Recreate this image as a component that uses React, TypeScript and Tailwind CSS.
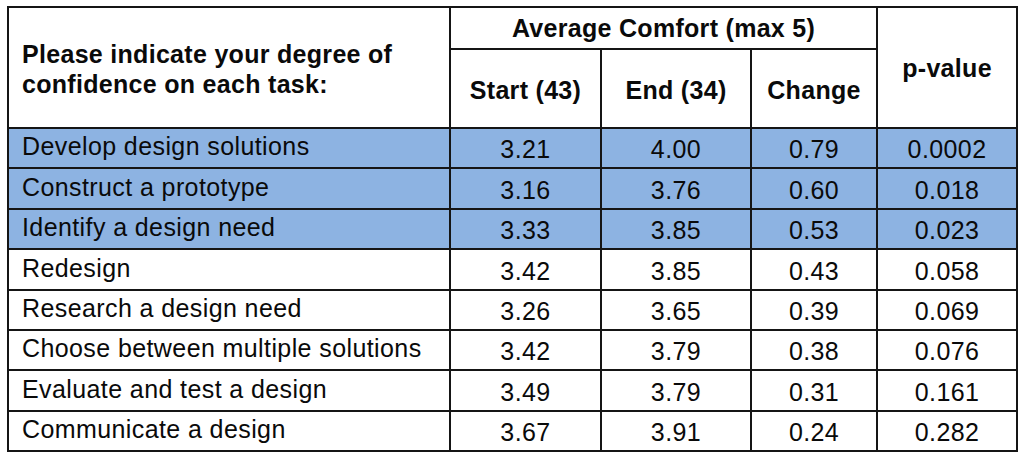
const rows = [
  { task: "Develop design solutions", start: "3.21", end: "4.00", change: "0.79", p: "0.0002", hi: true, h: "h-[40px]" },
  { task: "Construct a prototype", start: "3.16", end: "3.76", change: "0.60", p: "0.018", hi: true, h: "h-[41px]" },
  { task: "Identify a design need", start: "3.33", end: "3.85", change: "0.53", p: "0.023", hi: true, h: "h-[40px]" },
  { task: "Redesign", start: "3.42", end: "3.85", change: "0.43", p: "0.058", hi: false, h: "h-[41px]" },
  { task: "Research a design need", start: "3.26", end: "3.65", change: "0.39", p: "0.069", hi: false, h: "h-[40px]" },
  { task: "Choose between multiple solutions", start: "3.42", end: "3.79", change: "0.38", p: "0.076", hi: false, h: "h-[40px]" },
  { task: "Evaluate and test a design", start: "3.49", end: "3.79", change: "0.31", p: "0.161", hi: false, h: "h-[41px]" },
  { task: "Communicate a design", start: "3.67", end: "3.91", change: "0.24", p: "0.282", hi: false, h: "h-[40px]" },
];

export default function App() {
  return (
    <div className="w-[1024px] h-[458px] bg-white pt-[6px] pl-[7px] font-['Liberation_Sans',Arial,sans-serif] text-[#0a0a0a]">
      <table className="table-fixed border-collapse border-2 border-[#151515] w-[1009px]">
        <colgroup>
          <col className="w-[442px]" />
          <col className="w-[151px]" />
          <col className="w-[150px]" />
          <col className="w-[126px]" />
          <col className="w-[140px]" />
        </colgroup>
        <thead className="font-bold text-[25px] leading-[30px] tracking-[0.3px]">
          <tr className="h-[42px]">
            <th rowSpan={2} className="border-2 border-[#151515] text-left align-middle pl-[13px] pt-[2px] font-bold">
              Please indicate your degree of
              <br />
              confidence on each task:
            </th>
            <th colSpan={3} className="border-2 border-[#151515] text-center align-middle font-bold">
              Average Comfort (max 5)
            </th>
            <th rowSpan={2} className="border-2 border-[#151515] text-center align-middle font-bold">
              p-value
            </th>
          </tr>
          <tr className="h-[79px]">
            <th className="border-2 border-[#151515] text-center align-middle font-bold pt-[2px]">Start (43)</th>
            <th className="border-2 border-[#151515] text-center align-middle font-bold pt-[2px]">End (34)</th>
            <th className="border-2 border-[#151515] text-center align-middle font-bold pt-[2px]">Change</th>
          </tr>
        </thead>
        <tbody className="text-[25px] leading-[28px] tracking-[0.4px]">
          {rows.map((r) => (
            <tr key={r.task} className={`${r.h} ${r.hi ? "bg-[#8db3e2]" : "bg-white"}`}>
              <td className="border-2 border-[#151515] pl-[13px] align-middle pb-[4px]">{r.task}</td>
              <td className="border-2 border-[#151515] text-center align-middle pt-[2px]">{r.start}</td>
              <td className="border-2 border-[#151515] text-center align-middle pt-[2px]">{r.end}</td>
              <td className="border-2 border-[#151515] text-center align-middle pt-[2px]">{r.change}</td>
              <td className="border-2 border-[#151515] text-center align-middle pt-[2px]">{r.p}</td>
            </tr>
          ))}
        </tbody>
      </table>
    </div>
  );
}
